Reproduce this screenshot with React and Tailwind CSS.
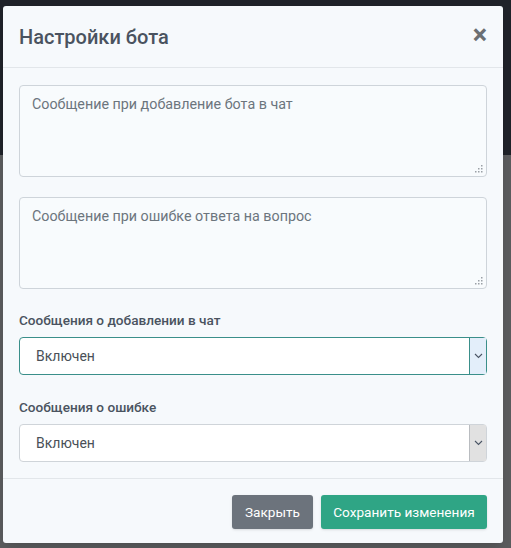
import React from "react";

function Chevron() {
  return (
    <svg width="9" height="6" viewBox="0 0 9 6" className="text-gray-600">
      <path d="M1 1l3.5 3.5L8 1" fill="none" stroke="currentColor" strokeWidth="1.1" />
    </svg>
  );
}

function Select({ value, focused }) {
  return (
    <div
      className={
        "flex h-[38px] rounded-[4px] border bg-white " +
        (focused ? "border-[#3a8f8a]" : "border-[#cfd4d9]")
      }
    >
      <div className="flex flex-1 items-center pl-[16px] text-[14px] text-[#495057]">{value}</div>
      <div
        className={
          "flex w-[17px] items-center justify-center border-l " +
          (focused ? "border-[#3a8f8a] bg-[#e3eefa]" : "border-[#b9bcc0] bg-[#e1e1e1]")
        }
      >
        <Chevron />
      </div>
    </div>
  );
}

function TextArea({ placeholder }) {
  return (
    <div className="relative h-[92px] rounded-[4px] border border-[#ced4da] bg-[#f8fbfd] px-[12px] py-[8px] text-[14.3px] text-[#6c757d]">
      {placeholder}
      <svg width="8" height="8" viewBox="0 0 8 8" className="absolute bottom-[3px] right-[3px]">
        <g fill="#9aa0a6">
          <rect x="6" y="0" width="1.5" height="1.5" />
          <rect x="3" y="3" width="1.5" height="1.5" />
          <rect x="6" y="3" width="1.5" height="1.5" />
          <rect x="0" y="6" width="1.5" height="1.5" />
          <rect x="3" y="6" width="1.5" height="1.5" />
          <rect x="6" y="6" width="1.5" height="1.5" />
        </g>
      </svg>
    </div>
  );
}

export default function App() {
  return (
    <div className="relative h-[548px] w-[511px] overflow-hidden font-['Roboto',sans-serif]">
      {/* dimmed page behind */}
      <div className="h-[155px] bg-[#1f2229]" />
      <div className="h-[393px] bg-[#5b5c5e]" />

      {/* modal */}
      <div className="absolute left-[3px] top-[6px] flex w-[500px] flex-col rounded-[3px] bg-[#f6f9fc] shadow-lg">
        <div className="flex h-[62px] items-center justify-between border-b border-[#e2e6ea] px-[16px]">
          <h2 className="text-[20px] font-medium text-[#4a5360]">Настройки бота</h2>
          <span className="mt-[-2px] text-[27px] font-bold leading-none text-[#6b6f73]">×</span>
        </div>

        <div className="flex flex-col px-[16px] pt-[17px] pb-[16px]">
          <TextArea placeholder="Сообщение при добавление бота в чат" />
          <div className="mt-[20px]">
            <TextArea placeholder="Сообщение при ошибке ответа на вопрос" />
          </div>

          <label className="mt-[21px] mb-[7px] text-[13.6px] font-medium leading-[20px] text-[#4a5360]">
            Сообщения о добавлении в чат
          </label>
          <Select value="Включен" focused />

          <label className="mt-[22px] mb-[7px] text-[13.6px] font-medium leading-[20px] text-[#4a5360]">
            Сообщения о ошибке
          </label>
          <Select value="Включен" />
        </div>

        <div className="flex justify-end gap-[8px] border-t border-[#e2e6ea] px-[16px] pt-[16px] pb-[14px]">
          <button className="h-[34px] w-[81px] rounded-[3px] bg-[#6c737c] text-[13.6px] text-white shadow-sm">
            Закрыть
          </button>
          <button className="h-[34px] w-[166px] rounded-[3px] bg-[#2fa585] text-[13.6px] text-white shadow-sm">
            Сохранить изменения
          </button>
        </div>
      </div>
    </div>
  );
}
